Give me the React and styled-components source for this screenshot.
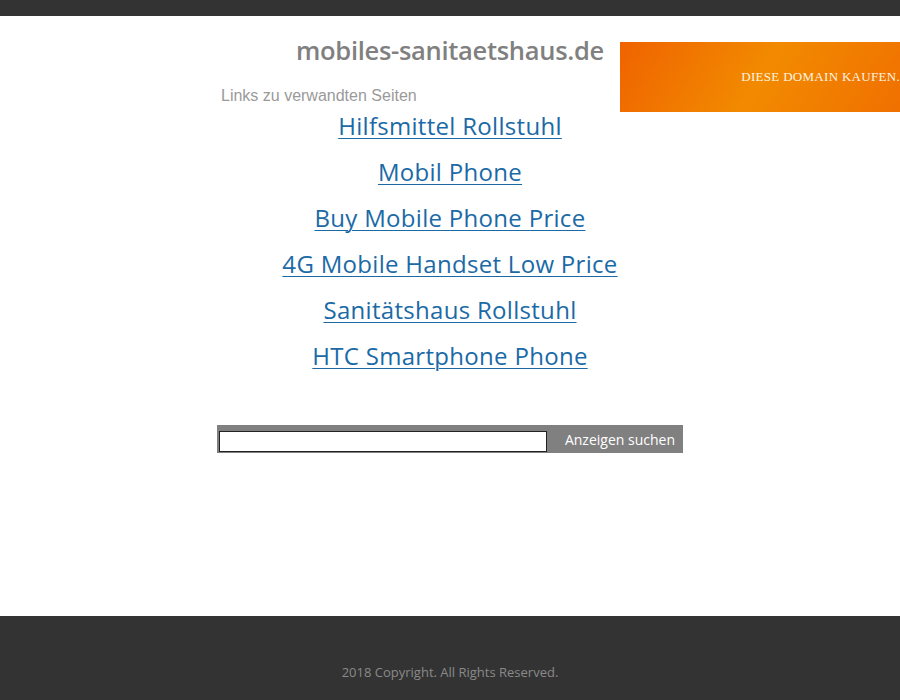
import React from "react";
import styled, { createGlobalStyle } from "styled-components";

const GlobalStyle = createGlobalStyle`
  html, body {
    margin: 0;
    padding: 0;
    background: #fff;
  }
  body {
    font-family: "Open Sans", "Liberation Sans", sans-serif;
  }
`;

const links = [
  "Hilfsmittel Rollstuhl",
  "Mobil Phone",
  "Buy Mobile Phone Price",
  "4G Mobile Handset Low Price",
  "Sanitätshaus Rollstuhl",
  "HTC Smartphone Phone",
];

const App = () => {
  return (
    <>
      <GlobalStyle />
      <Page>
        <TopBar />
        <Main>
          <BuyBanner href="#">DIESE DOMAIN KAUFEN.</BuyBanner>
          <Content>
            <Title>mobiles-sanitaetshaus.de</Title>
            <Subtitle>Links zu verwandten Seiten</Subtitle>
            <LinkList>
              {links.map((l) => (
                <LinkItem key={l} href="#">
                  {l}
                </LinkItem>
              ))}
            </LinkList>
            <SearchBar>
              <SearchInput type="text" />
              <SearchButton>Anzeigen suchen</SearchButton>
            </SearchBar>
          </Content>
        </Main>
        <Footer>2018 Copyright. All Rights Reserved.</Footer>
      </Page>
    </>
  );
};

export default App;

const Page = styled.div`
  display: flex;
  flex-direction: column;
  height: 700px;
  overflow: hidden;
`;

const TopBar = styled.div`
  height: 16px;
  background-color: #333333;
`;

const Main = styled.div`
  position: relative;
  height: 600px;
  background-color: #fff;
`;

const BuyBanner = styled.a`
  position: absolute;
  top: 26px;
  right: 0;
  width: 280px;
  height: 70px;
  display: flex;
  align-items: center;
  justify-content: flex-end;
  background: linear-gradient(120deg, #ef6300 0%, #f28a00 50%, #f07000 100%);
  color: #fff4e0;
  font-family: "Liberation Serif", "DejaVu Serif", serif;
  font-size: 13px;
  letter-spacing: 0.3px;
  text-decoration: none;
  white-space: nowrap;
`;

const Content = styled.div`
  width: 466px;
  margin: 0 auto;
  display: flex;
  flex-direction: column;
  align-items: center;
`;

const Title = styled.h1`
  margin: 19px 0 0 0;
  font-size: 25.5px;
  font-weight: 600;
  color: #808080;
  letter-spacing: -0.3px;
  line-height: 30px;
`;

const Subtitle = styled.div`
  align-self: flex-start;
  margin: 22px 0 0 4px;
  font-family: "Liberation Sans", Arial, sans-serif;
  font-size: 16px;
  color: #9a9a9a;
  line-height: 18px;
`;

const LinkList = styled.div`
  display: flex;
  flex-direction: column;
  align-items: center;
  gap: 14px;
  margin-top: 5px;
`;

const LinkItem = styled.a`
  font-size: 24px;
  letter-spacing: 0.3px;
  line-height: 32px;
  color: #1b6aa6;
  text-decoration: underline;
  text-underline-offset: 3px;
  text-decoration-thickness: 1px;
`;

const SearchBar = styled.div`
  width: 466px;
  height: 28px;
  margin-top: 53px;
  display: flex;
  align-items: center;
  background-color: #808080;
  box-sizing: border-box;
  padding: 0 8px 0 2px;
`;

const SearchInput = styled.input`
  width: 328px;
  height: 21px;
  margin-top: 4px;
  box-sizing: border-box;
  border: 1px solid #222;
  background: #fff;
  outline: none;
`;

const SearchButton = styled.button`
  margin-left: auto;
  border: none;
  background: transparent;
  color: #fff;
  font-family: "Open Sans", sans-serif;
  font-size: 14px;
  padding: 0;
  cursor: pointer;
`;

const Footer = styled.footer`
  flex: 1;
  background-color: #333333;
  color: #8a8a8a;
  font-size: 13px;
  display: flex;
  justify-content: center;
  align-items: flex-end;
  padding-bottom: 19px;
  box-sizing: border-box;
`;
